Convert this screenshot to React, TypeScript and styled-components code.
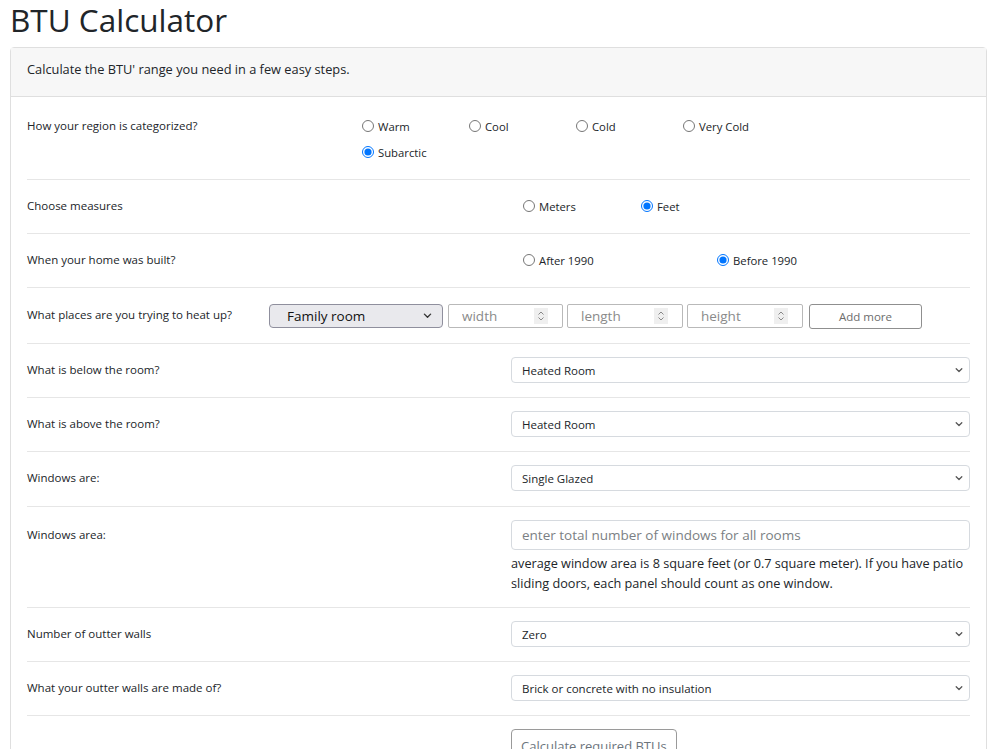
import React from 'react'
import styled, { createGlobalStyle } from 'styled-components'

const GlobalStyle = createGlobalStyle`
  body {
    margin: 0;
    font-family: "Open Sans", "Noto Sans", sans-serif;
    color: #212529;
    background: #fff;
  }
`

const regions = ['Warm', 'Cool', 'Cold', 'Very Cold', 'Subarctic']

function Chevron({ size = 10, color = '#555' }: { size?: number; color?: string }) {
  return (
    <svg width={size} height={size} viewBox="0 0 16 16" fill="none">
      <path d="M3.5 6l4.5 4.5L12.5 6" stroke={color} strokeWidth="2" strokeLinecap="round" strokeLinejoin="round" />
    </svg>
  )
}

function Spinner() {
  return (
    <SpinBox>
      <svg width="8" height="12" viewBox="0 0 8 12" fill="none">
        <path d="M1.5 4.5L4 2l2.5 2.5M1.5 7.5L4 10l2.5-2.5" stroke="#888" strokeWidth="1" />
      </svg>
    </SpinBox>
  )
}

function RadioGroup({ name, items, checked, itemWidth }: { name: string; items: string[]; checked: string; itemWidth: number }) {
  return (
    <Radios>
      {items.map((item) => (
        <RadioItem key={item} $width={itemWidth}>
          <input type="radio" name={name} defaultChecked={item === checked} />
          {item}
        </RadioItem>
      ))}
    </Radios>
  )
}

function Select({ value }: { value: string }) {
  return (
    <SelectWrap>
      <FormSelect defaultValue={value}>
        <option>{value}</option>
      </FormSelect>
      <SelectIcon>
        <Chevron />
      </SelectIcon>
    </SelectWrap>
  )
}

export default function App() {
  return (
    <Page>
      <GlobalStyle />
      <Title>BTU Calculator</Title>
      <Card>
        <CardHeader>Calculate the BTU' range you need in a few easy steps.</CardHeader>
        <CardBody>
          <Row $cols="335px auto">
            <Label>How your region is categorized?</Label>
            <RadioGroup name="region" items={regions} checked="Subarctic" itemWidth={107} />
          </Row>
          <Row $cols="484px 1fr">
            <Label>Choose measures</Label>
            <Indented>
              <RadioGroup name="measure" items={['Meters', 'Feet']} checked="Feet" itemWidth={118} />
            </Indented>
          </Row>
          <Row $cols="484px 1fr">
            <Label>When your home was built?</Label>
            <Indented>
              <RadioGroup name="built" items={['After 1990', 'Before 1990']} checked="Before 1990" itemWidth={194} />
            </Indented>
          </Row>
          <Row $cols="242px auto" $pt={14}>
            <Label>What places are you trying to heat up?</Label>
            <PlaceControls>
              <SelectWrap>
                <NativeSelect defaultValue="Family room">
                  <option>Family room</option>
                </NativeSelect>
                <SelectIcon $right={10}>
                  <Chevron size={11} color="#333" />
                </SelectIcon>
              </SelectWrap>
              <SizeField>
                <SizeInput placeholder="width" />
                <Spinner />
              </SizeField>
              <SizeField>
                <SizeInput placeholder="length" />
                <Spinner />
              </SizeField>
              <SizeField>
                <SizeInput placeholder="height" />
                <Spinner />
              </SizeField>
              <AddButton>Add more</AddButton>
            </PlaceControls>
          </Row>
          <Row $cols="484px 1fr">
            <Label>What is below the room?</Label>
            <Select value="Heated Room" />
          </Row>
          <Row $cols="484px 1fr">
            <Label>What is above the room?</Label>
            <Select value="Heated Room" />
          </Row>
          <Row $cols="484px 1fr" $pb={15}>
            <Label>Windows are:</Label>
            <Select value="Single Glazed" />
          </Row>
          <Row $cols="484px 1fr">
            <Label $offset={2}>Windows area:</Label>
            <div>
              <TextInput placeholder="enter total number of windows for all rooms" />
              <Help>
                average window area is 8 square feet (or 0.7 square meter). If you have patio sliding doors, each panel
                should count as one window.
              </Help>
            </div>
          </Row>
          <Row $cols="484px 1fr">
            <Label>Number of outter walls</Label>
            <Select value="Zero" />
          </Row>
          <Row $cols="484px 1fr">
            <Label>What your outter walls are made of?</Label>
            <Select value="Brick or concrete with no insulation" />
          </Row>
          <Row $cols="484px 1fr" $last>
            <span />
            <div>
              <CalcButton>Calculate required BTUs</CalcButton>
            </div>
          </Row>
        </CardBody>
      </Card>
    </Page>
  )
}

const Page = styled.div`
  padding: 0 13px 40px 10px;
`

const Title = styled.h1`
  margin: 0 0 7px;
  font-size: 31.5px;
  font-weight: 400;
  line-height: 40px;
  color: #212529;
`

const Card = styled.div`
  border: 1px solid #dfdfdf;
  border-radius: 4px;
  background: #fff;
`

const CardHeader = styled.div`
  background: #f7f7f7;
  border-bottom: 1px solid #dfdfdf;
  padding: 11px 16px 17px;
  font-size: 12.8px;
  line-height: 20px;
`

const CardBody = styled.div`
  padding: 3px 16px 0;
`

const Row = styled.div<{ $cols: string; $last?: boolean; $pt?: number; $pb?: number }>`
  display: grid;
  grid-template-columns: ${(p) => p.$cols};
  align-items: start;
  padding: ${(p) => p.$pt ?? 13}px 0 ${(p) => p.$pb ?? 14}px;
  border-bottom: ${(p) => (p.$last ? 'none' : '1px solid #e6e6e6')};
`

const Label = styled.div<{ $offset?: number }>`
  padding-top: ${(p) => p.$offset ?? 0}px;
  font-size: 11.5px;
  line-height: 26px;
  color: #212529;
`

const Indented = styled.div`
  padding-left: 12px;
`

const Radios = styled.div`
  display: flex;
  flex-wrap: wrap;
  width: 428px;
`

const RadioItem = styled.label<{ $width: number }>`
  display: flex;
  align-items: center;
  width: ${(p) => p.$width}px;
  height: 26px;
  font-size: 11.3px;
  color: #212529;

  input {
    width: 12px;
    height: 12px;
    margin: 0 4px 0 0;
  }
`

const SelectWrap = styled.div`
  display: grid;
  align-items: center;
`

const FormSelect = styled.select`
  grid-area: 1 / 1;
  appearance: none;
  width: 100%;
  height: 26px;
  padding: 0 28px 0 10px;
  border: 1px solid #d6dadf;
  border-radius: 4px;
  background: #fff;
  font-family: inherit;
  font-size: 11.5px;
  color: #212529;
`

const SelectIcon = styled.span<{ $right?: number }>`
  grid-area: 1 / 1;
  justify-self: end;
  display: flex;
  margin-right: ${(p) => p.$right ?? 6}px;
  pointer-events: none;
`

const PlaceControls = styled.div`
  display: grid;
  grid-template-columns: 174px 116px 116px 116px 115px;
  column-gap: 4px;
  align-items: center;

  & > :nth-child(2) {
    margin-left: 1px;
  }
  & > :last-child {
    margin-left: 2px;
    margin-top: 2px;
  }
`

const NativeSelect = styled.select`
  grid-area: 1 / 1;
  appearance: none;
  width: 100%;
  height: 24px;
  padding: 0 24px 0 17px;
  border: 1px solid #8f8f9d;
  border-radius: 4px;
  background: #e9e9ed;
  font-family: inherit;
  font-size: 13.5px;
  color: #111;
`

const SizeField = styled.div`
  display: flex;
  align-items: center;
  height: 24px;
  padding: 0 14px 0 13px;
  border: 1px solid #b9b9b9;
  border-radius: 2px;
  box-sizing: border-box;
`

const SizeInput = styled.input`
  flex: 1;
  min-width: 0;
  border: none;
  outline: none;
  padding: 0;
  font-family: inherit;
  font-size: 13.5px;
  color: #111;

  &::placeholder {
    color: #8a8a8a;
  }
`

const SpinBox = styled.span`
  display: flex;
  align-items: center;
  justify-content: center;
  width: 14px;
  height: 16px;
  background: #efefef;
`

const AddButton = styled.button`
  height: 25px;
  border: 1px solid #8f8f8f;
  border-radius: 3px;
  background: #fff;
  font-family: inherit;
  font-size: 11.5px;
  color: #6c6c6c;
`

const TextInput = styled.input`
  display: block;
  width: 100%;
  height: 30px;
  box-sizing: border-box;
  padding: 0 10px;
  border: 1px solid #d6dadf;
  border-radius: 4px;
  font-family: inherit;
  font-size: 13.5px;

  &::placeholder {
    color: #7b7f84;
  }
`

const Help = styled.div`
  margin-top: 3px;
  font-size: 12.7px;
  line-height: 20px;
  color: #212529;
`

const CalcButton = styled.button`
  height: 34px;
  padding: 0 9px;
  border: 1px solid #9a9a9a;
  border-radius: 4px;
  background: #fff;
  font-family: inherit;
  font-size: 13px;
  color: #6c757d;
`
